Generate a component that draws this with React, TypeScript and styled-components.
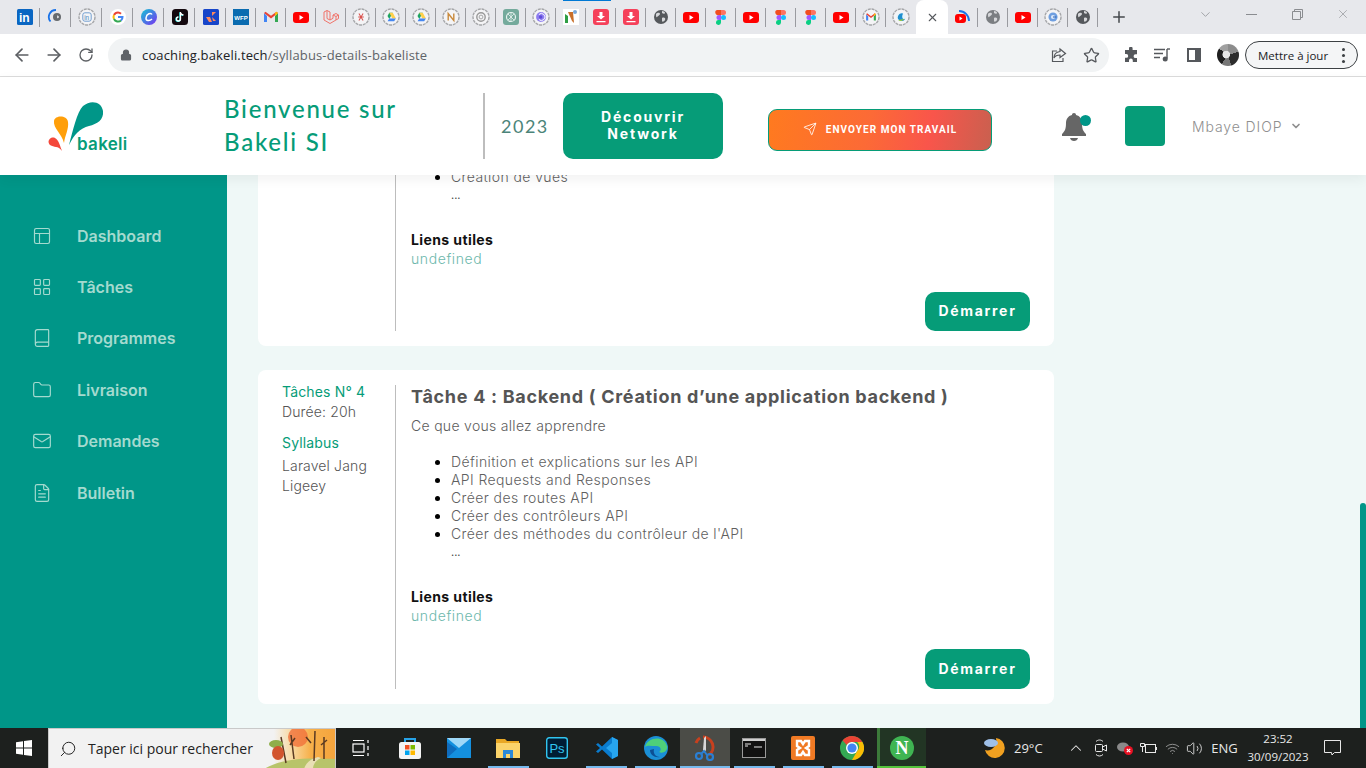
import React from "react";
import styled, { createGlobalStyle } from "styled-components";
import {
  ArrowLeft,
  ArrowRight,
  Book,
  ChevronDown,
  ChevronUp,
  FileText,
  Folder,
  LayoutGrid,
  Lock,
  Mail,
  PanelsTopLeft,
  Plus,
  RotateCw,
  Search,
  Send,
  Star,
  Volume2,
  Wifi,
  X,
} from "lucide-react";

const TEAL = "#009688";
const GREEN = "#069c78";
const SANS = `"Inter", "Open Sans", sans-serif`;
const UI = `"Open Sans", "Noto Sans", sans-serif`;

const GlobalStyle = createGlobalStyle`
  html, body { margin: 0; padding: 0; height: 100%; overflow: hidden; }
  #root { height: 100%; }
  * { box-sizing: border-box; }
`;

const Page = styled.div`
  height: 768px;
  width: 1366px;
  display: flex;
  flex-direction: column;
  overflow: hidden;
  font-family: ${SANS};
`;

/* ---------- browser chrome ---------- */

const TabStrip = styled.div`
  height: 34px;
  background: #e7e8ec;
  display: flex;
  padding-left: 9px;
  position: relative;
  flex-shrink: 0;
`;

const Progress = styled.div`
  position: absolute;
  left: 563px;
  top: 0;
  width: 48px;
  height: 1px;
  background: #0078d4;
`;

const Tab = styled.div<{ $wide?: boolean; $last?: boolean }>`
  width: ${p => (p.$wide ? 31 : 30)}px;
  height: 34px;
  display: flex;
  align-items: center;
  justify-content: center;
  padding-bottom: 1px;
  position: relative;
  &::after {
    content: "";
    position: absolute;
    right: 0;
    top: 8px;
    height: 19px;
    width: 1px;
    background: #9a9ba0;
    display: ${p => (p.$last ? "none" : "block")};
  }
`;

const ActiveTab = styled.div`
  width: 32px;
  height: 34px;
  background: #fff;
  border-radius: 8px 8px 0 0;
  display: flex;
  align-items: center;
  justify-content: center;
  color: #55585c;
`;

const NewTab = styled.div`
  margin-left: 9px;
  width: 24px;
  height: 34px;
  display: flex;
  align-items: center;
  justify-content: center;
  color: #45484c;
`;

const WindowControls = styled.div`
  margin-left: auto;
  display: flex;
  height: 28px;
  color: #8a8c90;
`;

const WindowButton = styled.div`
  width: 46px;
  display: flex;
  align-items: center;
  justify-content: center;
`;

const Toolbar = styled.div`
  height: 43px;
  background: #fff;
  border-bottom: 1px solid #dcdcdc;
  display: flex;
  align-items: center;
  padding-left: 6px;
  flex-shrink: 0;
`;

const NavButton = styled.div`
  width: 32px;
  display: flex;
  justify-content: center;
  color: #5c5f63;
`;

const Omnibox = styled.div`
  width: 1001px;
  height: 34px;
  margin-left: 6px;
  background: #f1f3f4;
  border-radius: 17px;
  display: flex;
  align-items: center;
  padding: 0 2px 0 12px;
  color: #5f6368;
`;

const Url = styled.div`
  margin-left: 10px;
  font-family: ${UI};
  font-size: 13px;
  letter-spacing: 0.15px;
  color: #5f6368;
  flex: 1;
  span { color: #202124; }
`;

const OmniIcon = styled.div`
  width: 32px;
  display: flex;
  justify-content: center;
  color: #55585c;
`;

const ExtIcon = styled.div<{ $w: number }>`
  width: ${p => p.$w}px;
  display: flex;
  justify-content: center;
  color: #55585c;
`;

const Avatar = styled.div`
  width: 22px;
  height: 22px;
  border-radius: 50%;
  background:
    radial-gradient(circle at 42% 48%, #e6e6e6 0 20%, transparent 24%),
    conic-gradient(#8c8c8c 0 20%, #2c2c2c 20% 45%, #777 45% 60%, #1f1f1f 60% 85%, #a0a0a0 85%);
  margin: 0 6px 0 0;
`;

const UpdateButton = styled.div`
  width: 113px;
  height: 28px;
  border: 1px solid #3c4043;
  border-radius: 14px;
  display: flex;
  align-items: center;
  padding-left: 12px;
  font-family: ${UI};
  font-size: 11.5px;
  color: #202124;
  background: #f4f5f6;
  position: relative;
  &::after {
    content: "";
    position: absolute;
    right: 12px;
    top: 6px;
    width: 3px;
    height: 3px;
    border-radius: 50%;
    background: #3c4043;
    box-shadow: 0 6px 0 #3c4043, 0 12px 0 #3c4043;
  }
`;

/* ---------- app header ---------- */

const Header = styled.header`
  height: 98px;
  background: #fff;
  display: flex;
  align-items: center;
  box-shadow: 0 4px 12px rgba(0, 0, 0, 0.06);
  position: relative;
  z-index: 2;
  flex-shrink: 0;
`;

const LogoSlot = styled.div`
  width: 224px;
  padding-left: 47px;
  padding-top: 1px;
  display: flex;
`;

const Title = styled.h1`
  width: 259px;
  margin: 0;
  padding-bottom: 2px;
  font-family: "Lato", "Noto Sans", sans-serif;
  font-weight: 500;
  font-size: 24px;
  line-height: 33px;
  letter-spacing: 1.75px;
  color: ${GREEN};
`;

const HeaderDivider = styled.div`
  width: 2px;
  height: 66px;
  background: #bdbdbd;
`;

const Year = styled.div`
  width: 62px;
  margin-left: 16px;
  padding-bottom: 1px;
  font-family: "Lato", sans-serif;
  font-size: 18px;
  letter-spacing: 1.5px;
  color: #4b8479;
`;

const DiscoverButton = styled.div`
  width: 160px;
  height: 66px;
  padding-bottom: 2px;
  border-radius: 10px;
  background: ${GREEN};
  color: #fff;
  display: flex;
  align-items: center;
  justify-content: center;
  text-align: center;
  font-weight: 700;
  font-size: 14px;
  line-height: 17px;
  letter-spacing: 1.8px;
`;

const SendButton = styled.div`
  width: 224px;
  height: 42px;
  margin: 8px 0 0 45px;
  padding-bottom: 2px;
  border-radius: 9px;
  border: 1px solid ${GREEN};
  background: linear-gradient(100deg, #ff7a1f 0%, #fc6a36 45%, #f9554b 72%, #c9604f 100%);
  color: #fff;
  display: flex;
  align-items: center;
  justify-content: center;
  gap: 9px;
  font-family: "Roboto", sans-serif;
  font-weight: 700;
  font-size: 10px;
  letter-spacing: 1.05px;
`;

const BellSlot = styled.div`
  width: 30px;
  height: 32px;
  margin-left: 68px;
  position: relative;
  color: #666;
`;

const BellDot = styled.div`
  position: absolute;
  top: 5px;
  right: -1px;
  width: 11px;
  height: 11px;
  border-radius: 50%;
  background: ${TEAL};
`;

const UserSquare = styled.div`
  width: 40px;
  height: 40px;
  margin-left: 35px;
  border-radius: 4px;
  background: ${GREEN};
`;

const UserName = styled.div`
  margin-left: 27px;
  display: flex;
  align-items: center;
  gap: 8px;
  font-weight: 300;
  font-size: 14px;
  letter-spacing: 0.9px;
  color: #8f8f8f;
`;

/* ---------- body ---------- */

const Body = styled.div`
  flex: 1;
  min-height: 0;
  display: flex;
`;

const Sidebar = styled.nav`
  width: 227px;
  background: ${TEAL};
  padding-top: 35px;
  flex-shrink: 0;
`;

const NavItem = styled.div`
  height: 51.4px;
  padding-left: 32px;
  display: flex;
  align-items: center;
  gap: 25px;
  color: #a4dacf;
  font-weight: 600;
  font-size: 16px;
`;

const Main = styled.main`
  flex: 1;
  min-width: 0;
  background: #eff8f7;
  display: flex;
  flex-direction: column;
  justify-content: flex-end;
  gap: 24px;
  padding: 0 0 24px 31px;
  overflow: hidden;
  position: relative;
`;

const ScrollThumb = styled.div`
  position: absolute;
  right: 0;
  bottom: 0;
  width: 6px;
  height: 225px;
  background: ${TEAL};
  border-radius: 3px 3px 0 0;
`;

const Card = styled.article`
  width: 796px;
  flex-shrink: 0;
  background: #fff;
  border-radius: 8px;
  padding: 15px 24px;
  display: flex;
`;

const Aside = styled.div`
  width: 113px;
  flex-shrink: 0;
  margin-top: -3px;
  font-size: 14px;
  line-height: 20px;
  letter-spacing: 0.15px;
  font-weight: 300;
  color: #555;
`;

const AsideLabel = styled.div<{ $gap?: boolean }>`
  color: ${GREEN};
  font-weight: 400;
  margin-top: ${p => (p.$gap ? 11 : 0)}px;
`;

const AsideText = styled.div<{ $gap?: boolean }>`
  margin-top: ${p => (p.$gap ? 3 : 0)}px;
`;

const Content = styled.div`
  flex: 1;
  border-left: 1px solid #bdbdbd;
  padding-left: 15px;
  display: flex;
  flex-direction: column;
`;

const TaskTitle = styled.h2`
  margin: 0;
  font-size: 18px;
  line-height: 24px;
  font-weight: 700;
  letter-spacing: 0.7px;
  color: #555;
`;

const Lead = styled.p`
  margin: 7px 0 0;
  font-size: 14px;
  line-height: 20px;
  font-weight: 300;
  letter-spacing: 0.3px;
  color: #5c5c5c;
`;

const List = styled.ul`
  margin: 17px 0 0;
  padding-left: 40px;
  font-size: 14px;
  line-height: 18px;
  font-weight: 300;
  letter-spacing: 0.4px;
  color: #5f5f5f;
  li::marker { color: #000; }
`;

const More = styled.div`
  margin-left: 40px;
  font-size: 11px;
  line-height: 18px;
  color: #444;
`;

const LinksTitle = styled.div`
  margin-top: 26px;
  font-size: 14px;
  line-height: 20px;
  font-weight: 700;
  letter-spacing: 0.4px;
  color: #111;
`;

const LinksValue = styled.div`
  font-size: 14px;
  line-height: 18px;
  font-weight: 300;
  letter-spacing: 0.6px;
  color: #6db8ac;
`;

const StartButton = styled.div<{ $short?: boolean }>`
  margin: 24px 0 0 auto;
  width: 105px;
  height: ${p => (p.$short ? 39 : 40)}px;
  padding-bottom: 2px;
  border-radius: 10px;
  background: ${GREEN};
  color: #fff;
  font-weight: 700;
  font-size: 14px;
  letter-spacing: 1.7px;
  display: flex;
  align-items: center;
  justify-content: center;
`;

/* ---------- taskbar ---------- */

const Taskbar = styled.footer`
  height: 40px;
  background: #1d201e;
  display: flex;
  flex-shrink: 0;
  position: relative;
  z-index: 3;
`;

const StartSlot = styled.div`
  width: 48px;
  display: flex;
  align-items: center;
  justify-content: center;
`;

const SearchBox = styled.div`
  width: 288px;
  background: #f2f2f2;
  border: 1px solid #c9c9c9;
  border-bottom: 0;
  display: flex;
  align-items: center;
  padding-left: 10px;
  gap: 11px;
  color: #222;
  font-family: ${UI};
  font-size: 14px;
  overflow: hidden;
  svg.art { margin-left: auto; flex-shrink: 0; }
`;

const SearchGlass = styled(Search)`
  transform: scaleX(-1);
`;

const AppSlot = styled.div<{ $running?: boolean; $active?: boolean; $tint?: boolean }>`
  width: 49.2px;
  display: flex;
  align-items: center;
  justify-content: center;
  position: relative;
  background: ${p => (p.$active ? "#4b4c47" : p.$tint ? "#223524" : "transparent")};
  box-shadow: ${p => (p.$tint ? "inset 3px 0 0 #3c7a3a" : "none")};
  &::after {
    content: "";
    position: absolute;
    left: ${p => (p.$active || p.$tint ? 0 : 4)}px;
    right: ${p => (p.$active || p.$tint ? 0 : 4)}px;
    bottom: 0;
    height: 2px;
    background: ${p => (p.$tint ? "#55c43c" : "#76b9ed")};
    display: ${p => (p.$running ? "block" : "none")};
  }
`;

const Tray = styled.div`
  margin-left: auto;
  display: flex;
  padding-right: 15px;
  color: #e8e8e8;
  font-family: ${UI};
`;

const TrayItem = styled.div<{ $w: number; $start?: boolean }>`
  width: ${p => p.$w}px;
  display: flex;
  align-items: center;
  justify-content: ${p => (p.$start ? "flex-start" : "center")};
  padding-left: ${p => (p.$start ? 4 : 0)}px;
  font-size: 13px;
`;

const Clock = styled.div`
  width: 70px;
  text-align: center;
  font-size: 11.5px;
  line-height: 18px;
  padding-top: 2px;
`;

/* ---------- favicons ---------- */

const Yt = (
  <>
    <rect x="0" y="3" width="16" height="11" rx="3" fill="#f00" />
    <path d="M6.5 6v5l4-2.5z" fill="#fff" />
  </>
);

const Globe = (fill: string) => (
  <>
    <circle cx="8" cy="8" r="7" fill={fill} />
    <path d="M3 5c2-2 4-1 4 0s-2 2-3 3-1-2-1-3zM9 9c2-1 4 0 3 2s-3 2-3 1 0-3 0-3zM9 2c2 0 3 1 3 2s-2 1-3 0z" fill="#d6d7da" />
  </>
);

const Drive = (
  <>
    <path d="M5.5 2h5l-5 9-2.500-4.500z" fill="#1fa463" />
    <path d="M10.500 2L15 10h-5L5.500 2z" fill="#ffd04b" />
    <path d="M3 14l2.500-4H15l-2.500 4z" fill="#4688f1" />
  </>
);

const Figma = (
  <>
    <path d="M4 1h4v5H6a2.500 2.500 0 0 1-2-5z" fill="#f24e1e" />
    <path d="M8 1h2.500a2.500 2.500 0 0 1 0 5H8z" fill="#ff7262" />
    <path d="M6 6h2v5H6a2.500 2.500 0 0 1 0-5z" fill="#a259ff" />
    <circle cx="10.500" cy="8.500" r="2.500" fill="#1abcfe" />
    <path d="M6 11h2v2.500A2.500 2.500 0 1 1 6 11z" fill="#0acf83" />
  </>
);

const Download = (
  <>
    <rect width="16" height="16" rx="3" fill="#f5405a" />
    <path d="M6.500 3h3v4H12L8 10.500 4 7h2.500zM3.500 12h9v1.300h-9z" fill="#fff" />
  </>
);

const Gmail = (
  <>
    <path d="M1 4v9h3V7z" fill="#4285f4" />
    <path d="M15 4v9h-3V7z" fill="#34a853" />
    <path d="M1 4l7 5.500L15 4l-1.500-1.200L8 6.800 2.500 2.800z" fill="#ea4335" />
    <path d="M12 7l3-3-1.500-1.200L12 4z" fill="#fbbc04" />
  </>
);

const favicons: Record<string, React.ReactNode> = {
  linkedin: (
    <>
      <rect width="16" height="16" rx="1.500" fill="#0a66c2" />
      <text x="2" y="13" fontFamily="Liberation Sans" fontWeight="700" fontSize="12" fill="#fff">in</text>
    </>
  ),
  arc: (
    <>
      <circle cx="9" cy="8" r="4" fill="#666a6e" />
      <path d="M9 6.500c1 0 2 .5 2 1.500s-1 1.500-2 1z" fill="#d6d7da" />
      <path d="M8 1a7 7 0 0 0-5.500 11.500" stroke="#1a73e8" strokeWidth="1.800" fill="none" />
    </>
  ),
  inlet: (
    <>
      <rect x="2" y="2" width="12" height="12" rx="3" fill="none" stroke="#5b8fc9" strokeWidth="1.200" />
      <text x="4" y="12" fontFamily="Liberation Sans" fontSize="9" fill="#4f86c0">in</text>
    </>
  ),
  google: (
    <>
      <circle cx="8" cy="8" r="8" fill="#fff" />
      <path d="M8 3.500a4.500 4.500 0 0 1 3 1.200" stroke="#ea4335" strokeWidth="2" fill="none" />
      <path d="M8 3.500a4.500 4.500 0 0 0-4 2.500" stroke="#ea4335" strokeWidth="2" fill="none" />
      <path d="M4 6a4.500 4.500 0 0 0 0 4" stroke="#fbbc05" strokeWidth="2" fill="none" />
      <path d="M4 10a4.500 4.500 0 0 0 7 1.500" stroke="#34a853" strokeWidth="2" fill="none" />
      <path d="M11 11.500A4.500 4.500 0 0 0 12.500 8H8" stroke="#4285f4" strokeWidth="2" fill="none" />
    </>
  ),
  canva: (
    <>
      <defs>
        <linearGradient id="cv" x1="0" y1="0" x2="1" y2="1">
          <stop offset="0" stopColor="#12c6d4" />
          <stop offset="1" stopColor="#7b2ff2" />
        </linearGradient>
      </defs>
      <circle cx="8" cy="8" r="8" fill="url(#cv)" />
      <path d="M11 5.500C10 3.500 5.500 4.500 5 9c-.3 3 3.500 3.500 6 1" stroke="#fff" strokeWidth="1.500" fill="none" />
    </>
  ),
  tiktok: (
    <>
      <rect width="16" height="16" rx="3.500" fill="#14090f" />
      <path d="M8.500 3v7a2 2 0 1 1-2-2M8.500 3c.3 1.800 1.300 2.800 3 3" stroke="#25f4ee" strokeWidth="1.500" fill="none" transform="translate(-.5 .3)" />
      <path d="M8.500 3v7a2 2 0 1 1-2-2M8.500 3c.3 1.800 1.300 2.800 3 3" stroke="#fff" strokeWidth="1.300" fill="none" />
    </>
  ),
  jira: (
    <>
      <rect width="16" height="16" rx="1.500" fill="#1745c9" />
      <path d="M9 3l4 0-4 4zM3 8l4 0 2 5H6zM9 8l4 4-3 0z" fill="#ff8a5c" />
    </>
  ),
  wfp: (
    <>
      <rect width="16" height="16" fill="#0a6bb0" />
      <text x="8" y="10.500" textAnchor="middle" fontFamily="Liberation Sans" fontWeight="700" fontSize="6" fill="#fff">WFP</text>
    </>
  ),
  gmail: Gmail,
  yt: Yt,
  laravel: (
    <path d="M1 3l3-1.500L7 3v8l3-1.700V6l3-1.500L15.500 6v3.500L7 14.500 1 11zM4 1.500v8l3 1.500M10 6l3 1.500 2.500-1.500M13 7.500v3.500" stroke="#f0736a" strokeWidth="1" fill="none" />
  ),
  xred: <path d="M5 3l6 10M11 3L5 13M4 8h8" stroke="#d9534f" strokeWidth="1.500" fill="none" />,
  drive: Drive,
  nring: <path d="M4 13V3l8 10V3" stroke="#c98a3c" strokeWidth="2" fill="none" />,
  grey: (
    <>
      <circle cx="8" cy="8" r="6" fill="none" stroke="#999" strokeWidth="2" />
      <rect x="5.500" y="5.500" width="5" height="5" rx="2" fill="none" stroke="#999" strokeWidth="1.400" />
    </>
  ),
  gpt: (
    <>
      <rect width="16" height="16" rx="3" fill="#74aa9c" />
      <circle cx="8" cy="8" r="4.500" fill="none" stroke="#e7f2ef" strokeWidth="1.200" />
      <path d="M5 5l6 6M11 5l-6 6M8 3.500v9" stroke="#e7f2ef" strokeWidth=".8" />
    </>
  ),
  purple: (
    <>
      <circle cx="8" cy="8" r="7" fill="#8d7cf0" />
      <path d="M5 4.500a5 5 0 1 1 0 7" stroke="#fff" strokeWidth="1.400" fill="none" />
      <circle cx="7.500" cy="8" r="2.500" fill="#5f4bd8" />
    </>
  ),
  ncolor: (
    <>
      <rect width="16" height="16" fill="#fff" />
      <path d="M2 14V5l3 2v7z" fill="#2f9e44" />
      <path d="M5 3l4 9 2 2-1-11z" fill="#c9702b" />
      <circle cx="12" cy="3" r="2" fill="#7aa8d8" />
    </>
  ),
  download: Download,
  globe: Globe("#55585c"),
  globeGrey: Globe("#7b7e82"),
  figma: Figma,
  mail: Gmail,
  cgreen: (
    <>
      <circle cx="8" cy="8" r="6.500" fill="#e6f4fb" />
      <path d="M11 3a5.500 5.500 0 1 0 3 7.500C11 12 8 9 11 3z" fill="#1f8fcf" />
      <path d="M4 12.500c3 2 7 1 9-2-3 1.500-6 1-9 2z" fill="#9ac83a" />
    </>
  ),
  ytArc: (
    <>
      <rect x="0" y="5" width="11" height="9" rx="3" fill="#f00" />
      <path d="M4.500 7.500v4l3-2z" fill="#fff" />
      <path d="M4 2a10 10 0 0 1 10 10" stroke="#1a73e8" strokeWidth="1.800" fill="none" />
    </>
  ),
  bluering: (
    <>
      <circle cx="8" cy="8" r="6.500" fill="#6f9fe0" />
      <circle cx="8" cy="8" r="3" fill="#dbe7f7" />
      <path d="M8 8h5" stroke="#2f66b8" strokeWidth="1.500" />
    </>
  ),
};

const Favicon: React.FC<{ kind: string; ring?: boolean }> = ({ kind, ring }) => (
  <svg width="18" height="18" viewBox="0 0 18 18">
    {ring && <circle cx="9" cy="9" r="8" fill="#f4f4f6" stroke="#a5a6a9" strokeWidth="1.400" strokeDasharray="3 .8" />}
    <g transform={ring ? "translate(3.400 3.400) scale(.7)" : "translate(1 1)"}>{favicons[kind]}</g>
  </svg>
);

const leftTabs: [string, boolean?][] = [
  ["linkedin"], ["arc"], ["inlet", true], ["google"], ["canva"], ["tiktok"], ["jira"], ["wfp"], ["gmail"], ["yt"],
  ["laravel"], ["xred", true], ["drive", true], ["drive", true], ["nring", true], ["grey", true], ["gpt"],
  ["purple", true], ["ncolor"], ["download"], ["download"], ["globe"], ["yt"], ["figma"], ["yt"], ["figma"],
  ["figma"], ["yt"], ["mail", true], ["cgreen", true],
];
const rightTabs: [string, boolean?][] = [["ytArc"], ["globeGrey"], ["yt"], ["bluering", true], ["globe"]];

/* ---------- drawn logos ---------- */

const BakeliLogo = () => (
  <svg width="85" height="58" viewBox="0 0 85 58">
    <path d="M22 47C26 32 30 14 36 8c8-7 19-4 20 5 1 9-6 13-14 15-9 2-15 9-20 19z" fill={TEAL} />
    <path d="M17 45C15 36 6 30 7 23c1-6 13-6 14 1 1 7-3 13-4 21z" fill="#ff9f0a" />
    <path d="M15 53C11 47 7 50 3 47c-4-4 1-9 5-7 4 2 5 8 7 13z" fill="#f4483b" />
    <text x="30" y="52" fontFamily="Inter, sans-serif" fontWeight="600" fontSize="17" letterSpacing=".3" fill={GREEN}>bakeli</text>
  </svg>
);

const Bell = () => (
  <svg width="28" height="32" viewBox="0 0 28 32">
    <path d="M14 3c1.300 0 2 .8 2 2 4 1 6 4 6 8 0 6 1 8 4 11v2H2v-2c3-3 4-5 4-11 0-4 2-7 6-8 0-1.200.7-2 2-2z" fill="currentColor" />
    <path d="M10 28h8c-.5 2-2 3-4 3s-3.500-1-4-3z" fill="currentColor" />
  </svg>
);

const Windows = () => (
  <svg width="16" height="16" viewBox="0 0 16 16" fill="#fff">
    <path d="M0 2.300L7 1.300V7.500H0zM8 1.100L16 0v7.500H8zM0 8.500h7v6.200l-7-1zM8 8.500h8V16L8 14.900z" />
  </svg>
);

const SearchArt = () => (
  <svg className="art" width="71" height="40" viewBox="0 0 71 40">
    <defs>
      <linearGradient id="sky" x1="0" y1="0" x2="1" y2="0">
        <stop offset="0" stopColor="#f2f2f2" />
        <stop offset=".3" stopColor="#f8d9a0" />
        <stop offset=".6" stopColor="#f7b04a" />
        <stop offset="1" stopColor="#f5a43c" />
      </linearGradient>
    </defs>
    <rect x="10" width="61" height="40" fill="url(#sky)" />
    <circle cx="34" cy="8" r="10" fill="#f0713a" opacity=".8" />
    <path d="M0 40c14-8 30-12 71-10v10z" fill="#b8c46a" />
    <path d="M40 40c2-6 6-10 14-12l3 1c-6 3-8 7-8 11z" fill="#e9dfb4" />
    <path d="M22 34L17 8M30 30L27 6M50 32l1-30M60 30V8M57 16l6-5M26 16l5-7M47 14l-5-6" stroke="#5a3a22" strokeWidth="1.500" fill="none" />
    <ellipse cx="12" cy="15" rx="7" ry="4" fill="#8fae4a" />
    <ellipse cx="14" cy="24" rx="6" ry="7" fill="#d2552f" />
  </svg>
);

const TaskView = () => (
  <svg width="18" height="18" viewBox="0 0 18 18" fill="none" stroke="#fff" strokeWidth="1.200">
    <rect x="1" y="5" width="11" height="8" />
    <path d="M1 1.500h11M1 16.500h11M16 1v3M16 7v4M16 14v3" />
  </svg>
);

const apps: Record<string, React.ReactNode> = {
  store: (
    <svg width="24" height="24" viewBox="0 0 24 24">
      <path d="M7 6V3h10v3" stroke="#27a3e8" strokeWidth="2" fill="none" />
      <rect x="1" y="6" width="22" height="17" rx="2.500" fill="#f4f4f4" />
      <rect x="7" y="9" width="4.500" height="4.500" fill="#f25022" />
      <rect x="12.500" y="9" width="4.500" height="4.500" fill="#7fba00" />
      <rect x="7" y="14.500" width="4.500" height="4.500" fill="#00a4ef" />
      <rect x="12.500" y="14.500" width="4.500" height="4.500" fill="#ffb900" />
    </svg>
  ),
  mail: (
    <svg width="24" height="22" viewBox="0 0 24 22">
      <rect y="1" width="24" height="20" fill="#1490df" />
      <path d="M0 1h24L12 11z" fill="#9fd8f8" />
      <path d="M0 21V5l10 7z" fill="#0f6cbd" />
    </svg>
  ),
  explorer: (
    <svg width="24" height="22" viewBox="0 0 24 22">
      <path d="M0 2h9l2 2h12v16H0z" fill="#e9a825" />
      <rect y="6" width="24" height="15" fill="#fbd46b" />
      <path d="M7 13h10v8h-3v-4h-4v4H7z" fill="#2b88d8" />
    </svg>
  ),
  ps: (
    <svg width="22" height="22" viewBox="0 0 22 22">
      <rect x=".7" y=".7" width="20.600" height="20.600" rx="2.500" fill="#001d34" stroke="#31c5f0" strokeWidth="1.400" />
      <text x="11" y="16" textAnchor="middle" fontFamily="Liberation Sans" fontSize="13" fill="#31c5f0">Ps</text>
    </svg>
  ),
  code: (
    <svg width="24" height="24" viewBox="0 0 24 24">
      <path d="M17 1l6 3v16l-6 3L7 13.500l-4 3.500-2-1.500L5 12 1 8.500 3 7l4 3.500z" fill="#0a7ccf" />
      <path d="M17 1l6 3v16l-6 3zM17 7l-6 5 6 5z" fill="#27a5ef" />
    </svg>
  ),
  edge: (
    <svg width="24" height="24" viewBox="0 0 24 24">
      <circle cx="12" cy="12" r="12" fill="#1b8fd6" />
      <path d="M1 11C3 2 19-2 23 10c1 5-4 8-8 6 3-2 2-6-3-6C7 10 3 9 1 11z" fill="#4ed07a" />
      <path d="M6 14c0 5 5 8 10 7-5 0-7-4-6-8z" fill="#0c4f94" />
    </svg>
  ),
  snip: (
    <svg width="24" height="26" viewBox="0 0 24 26" fill="none">
      <path d="M10 2a10 10 0 0 1 6 18" stroke="#c8401e" strokeWidth="3" />
      <path d="M3 8a9 9 0 0 1 4-5" stroke="#c8401e" strokeWidth="3" />
      <path d="M13 1v14l-2 3-1-3 1-12z" fill="#d8d8d8" />
      <circle cx="6" cy="21" r="3" stroke="#2a7fd4" strokeWidth="2.200" />
      <circle cx="17" cy="22" r="3" stroke="#2a7fd4" strokeWidth="2.200" />
      <path d="M8 19l3-3 3 4" stroke="#2a7fd4" strokeWidth="2" />
    </svg>
  ),
  cmd: (
    <svg width="24" height="20" viewBox="0 0 24 20">
      <rect x=".5" y=".5" width="23" height="19" fill="#111" stroke="#9a9a9a" />
      <rect x="1" y="1" width="22" height="2" fill="#cfcfcf" />
      <path d="M3 6h6M12 9h8M3 8h3" stroke="#e8e8e8" strokeWidth="1.200" />
    </svg>
  ),
  xampp: (
    <svg width="24" height="24" viewBox="0 0 24 24">
      <rect width="24" height="24" rx="2" fill="#f07a24" />
      <path d="M6 5h4l2 3 2-3h4v5l-3 2 3 2v5h-4l-2-3-2 3H6v-5l3-2-3-2z" fill="none" stroke="#fff" strokeWidth="2.400" />
    </svg>
  ),
  chrome: (
    <svg width="24" height="24" viewBox="0 0 24 24">
      <circle cx="12" cy="12" r="12" fill="#34a853" />
      <path d="M12 0a12 12 0 0 1 10.400 6H12a6 6 0 0 0-5.200 3L2.600 4.600A12 12 0 0 1 12 0z" fill="#ea4335" />
      <path d="M22.400 6A12 12 0 0 1 12 24l5.200-9a6 6 0 0 0 0-9z" fill="#fbbc05" />
      <circle cx="12" cy="12" r="6" fill="#fff" />
      <circle cx="12" cy="12" r="4.600" fill="#4285f4" />
    </svg>
  ),
  node: (
    <svg width="24" height="24" viewBox="0 0 24 24">
      <circle cx="12" cy="12" r="12" fill="#3fb552" />
      <text x="12" y="18" textAnchor="middle" fontFamily="Liberation Serif" fontWeight="700" fontSize="18" fill="#fff">N</text>
    </svg>
  ),
};

const taskbarApps: { key: string; running?: boolean; active?: boolean; tint?: boolean }[] = [
  { key: "store" },
  { key: "mail" },
  { key: "explorer", running: true },
  { key: "ps" },
  { key: "code", running: true },
  { key: "edge", running: true },
  { key: "snip", running: true, active: true },
  { key: "cmd", running: true },
  { key: "xampp", running: true },
  { key: "chrome", running: true },
  { key: "node", running: true, tint: true },
];

/* ---------- data ---------- */

const nav = [
  { label: "Dashboard", Icon: PanelsTopLeft },
  { label: "Tâches", Icon: LayoutGrid },
  { label: "Programmes", Icon: Book },
  { label: "Livraison", Icon: Folder },
  { label: "Demandes", Icon: Mail },
  { label: "Bulletin", Icon: FileText },
];

const backendTopics = [
  "Définition et explications sur les API",
  "API Requests and Responses",
  "Créer des routes API",
  "Créer des contrôleurs API",
  "Créer des méthodes du contrôleur de l'API",
];

const TaskBody: React.FC<{ topics: string[]; short?: boolean }> = ({ topics, short }) => (
  <>
    <List>
      {topics.map(t => (
        <li key={t}>{t}</li>
      ))}
    </List>
    <More>...</More>
    <LinksTitle>Liens utiles</LinksTitle>
    <LinksValue>undefined</LinksValue>
    <StartButton $short={short}>Démarrer</StartButton>
  </>
);

export default function App() {
  return (
    <Page>
      <GlobalStyle />
      <TabStrip>
        <Progress />
        {leftTabs.map(([kind, ring], i) => (
          <Tab key={i} $wide={i < 7} $last={i === leftTabs.length - 1}>
            <Favicon kind={kind} ring={ring} />
          </Tab>
        ))}
        <ActiveTab>
          <X size={13} strokeWidth={2} />
        </ActiveTab>
        {rightTabs.map(([kind, ring], i) => (
          <Tab key={i}>
            <Favicon kind={kind} ring={ring} />
          </Tab>
        ))}
        <NewTab>
          <Plus size={18} strokeWidth={2} />
        </NewTab>
        <WindowControls>
          <WindowButton>
            <ChevronDown size={15} strokeWidth={1.2} />
          </WindowButton>
          <WindowButton>
            <svg width="11" height="11" viewBox="0 0 11 11" stroke="currentColor" fill="none"><path d="M0 5.500h11" /></svg>
          </WindowButton>
          <WindowButton>
            <svg width="11" height="11" viewBox="0 0 11 11" stroke="currentColor" fill="none"><path d="M.5 2.500h8v8h-8zM2.500 2.500v-2h8v8h-2" /></svg>
          </WindowButton>
          <WindowButton>
            <X size={14} strokeWidth={1.1} />
          </WindowButton>
        </WindowControls>
      </TabStrip>

      <Toolbar>
        <NavButton><ArrowLeft size={20} strokeWidth={2} /></NavButton>
        <NavButton><ArrowRight size={20} strokeWidth={2} /></NavButton>
        <NavButton><RotateCw size={16} strokeWidth={2} /></NavButton>
        <Omnibox>
          <Lock size={12} strokeWidth={2.4} fill="currentColor" />
          <Url><span>coaching.bakeli.tech</span>/syllabus-details-bakeliste</Url>
          <OmniIcon>
            <svg width="16" height="16" viewBox="0 0 16 16" fill="none" stroke="currentColor" strokeWidth="1.200">
              <path d="M6 4H1.500v10.500H12V11M9 2l5.500 4.500L9 10.500V8c-3 0-5 1-6 3 0-3 2-6 6-6.500z" />
            </svg>
          </OmniIcon>
          <OmniIcon><Star size={17} strokeWidth={1.8} /></OmniIcon>
        </Omnibox>
        <ExtIcon $w={44}>
          <svg width="16" height="16" viewBox="0 0 16 16" fill="currentColor">
            <path d="M6 1.500a1.800 1.800 0 0 1 3.600 0V3H14v4.300h-1.500a1.900 1.900 0 0 0 0 3.800H14V15H9.800v-1.500a1.900 1.900 0 0 0-3.800 0V15H2v-4.200h1.300a1.900 1.900 0 0 0 0-3.800H2V3h4z" />
          </svg>
        </ExtIcon>
        <ExtIcon $w={18}>
          <svg width="16" height="14" viewBox="0 0 16 14" fill="none" stroke="currentColor" strokeWidth="1.400">
            <path d="M0 1.500h11M0 5.500h9M0 9.500h6M13 1v9.500" />
            <circle cx="11.200" cy="11" r="1.800" fill="currentColor" />
            <path d="M13 1h3" />
          </svg>
        </ExtIcon>
        <ExtIcon $w={46}>
          <svg width="14" height="14" viewBox="0 0 14 14">
            <path d="M0 0h14v14H0zM2 2v10h6V2z" fill="currentColor" fillRule="evenodd" />
          </svg>
        </ExtIcon>
        <Avatar />
        <UpdateButton>Mettre à jour</UpdateButton>
      </Toolbar>

      <Header>
        <LogoSlot><BakeliLogo /></LogoSlot>
        <Title>Bienvenue sur<br />Bakeli SI</Title>
        <HeaderDivider />
        <Year>2023</Year>
        <DiscoverButton>Découvrir<br />Network</DiscoverButton>
        <SendButton>
          <Send size={14} strokeWidth={1.4} />
          ENVOYER MON TRAVAIL
        </SendButton>
        <BellSlot>
          <Bell />
          <BellDot />
        </BellSlot>
        <UserSquare />
        <UserName>
          Mbaye DIOP
          <ChevronDown size={12} strokeWidth={3.4} />
        </UserName>
      </Header>

      <Body>
        <Sidebar>
          {nav.map(({ label, Icon }) => (
            <NavItem key={label}>
              <Icon size={20} strokeWidth={1.4} />
              {label}
            </NavItem>
          ))}
        </Sidebar>
        <Main>
          <Card>
            <Aside />
            <Content>
              <TaskBody topics={["Création de vues"]} short />
            </Content>
          </Card>
          <Card>
            <Aside>
              <AsideLabel>Tâches N° 4</AsideLabel>
              <AsideText>Durée: 20h</AsideText>
              <AsideLabel $gap>Syllabus</AsideLabel>
              <AsideText $gap>Laravel Jang Ligeey</AsideText>
            </Aside>
            <Content>
              <TaskTitle>Tâche 4 : Backend ( Création d’une application backend )</TaskTitle>
              <Lead>Ce que vous allez apprendre</Lead>
              <TaskBody topics={backendTopics} />
            </Content>
          </Card>
          <ScrollThumb />
        </Main>
      </Body>

      <Taskbar>
        <StartSlot><Windows /></StartSlot>
        <SearchBox>
          <SearchGlass size={18} strokeWidth={1.3} />
          Taper ici pour rechercher
          <SearchArt />
        </SearchBox>
        <AppSlot><TaskView /></AppSlot>
        {taskbarApps.map(a => (
          <AppSlot key={a.key} $running={a.running} $active={a.active} $tint={a.tint}>
            {apps[a.key]}
          </AppSlot>
        ))}
        <Tray>
          <TrayItem $w={30}>
            <svg width="24" height="24" viewBox="0 0 24 24">
              <path d="M13 2a10 10 0 1 1-11 12C8 16 15 10 13 2z" fill="#f0a020" />
              <ellipse cx="8" cy="7" rx="7" ry="4" fill="#9fc0e8" />
            </svg>
          </TrayItem>
          <TrayItem $w={53} $start>29°C</TrayItem>
          <TrayItem $w={25}><ChevronUp size={18} strokeWidth={1.4} /></TrayItem>
          <TrayItem $w={25}>
            <svg width="14" height="18" viewBox="0 0 14 18" fill="none" stroke="currentColor">
              <rect x="1.500" y="5.500" width="7" height="7" rx="1" />
              <path d="M8.500 8l4-2v6l-4-2M2 2.500c2-2 5-2 7 0M2 15.500c2 2 5 2 7 0" />
            </svg>
          </TrayItem>
          <TrayItem $w={23}>
            <svg width="18" height="16" viewBox="0 0 18 16">
              <ellipse cx="7" cy="7" rx="6" ry="4.500" fill="#8a8a8a" />
              <circle cx="12.500" cy="10.500" r="4.500" fill="#e81123" />
              <path d="M10.800 8.800l3.400 3.400M14.200 8.800l-3.400 3.400" stroke="#fff" strokeWidth="1.200" />
            </svg>
          </TrayItem>
          <TrayItem $w={25}>
            <svg width="17" height="12" viewBox="0 0 17 12" fill="none" stroke="currentColor">
              <rect x="5.500" y="2.500" width="10" height="8" />
              <path d="M16.500 5v3M.5 1.500h4v3h-4zM2.500 4.500V10" />
            </svg>
          </TrayItem>
          <TrayItem $w={22}><Wifi size={15} strokeWidth={1.3} color="#a8a8a8" /></TrayItem>
          <TrayItem $w={23}><Volume2 size={17} strokeWidth={1.2} /></TrayItem>
          <TrayItem $w={37}>ENG</TrayItem>
          <Clock>23:52<br />30/09/2023</Clock>
          <TrayItem $w={38}>
            <svg width="17" height="16" viewBox="0 0 17 16" fill="none" stroke="currentColor">
              <path d="M.5.500h16v12H10.500L8 15l-.5-2.500h-7z" />
            </svg>
          </TrayItem>
        </Tray>
      </Taskbar>
    </Page>
  );
}
